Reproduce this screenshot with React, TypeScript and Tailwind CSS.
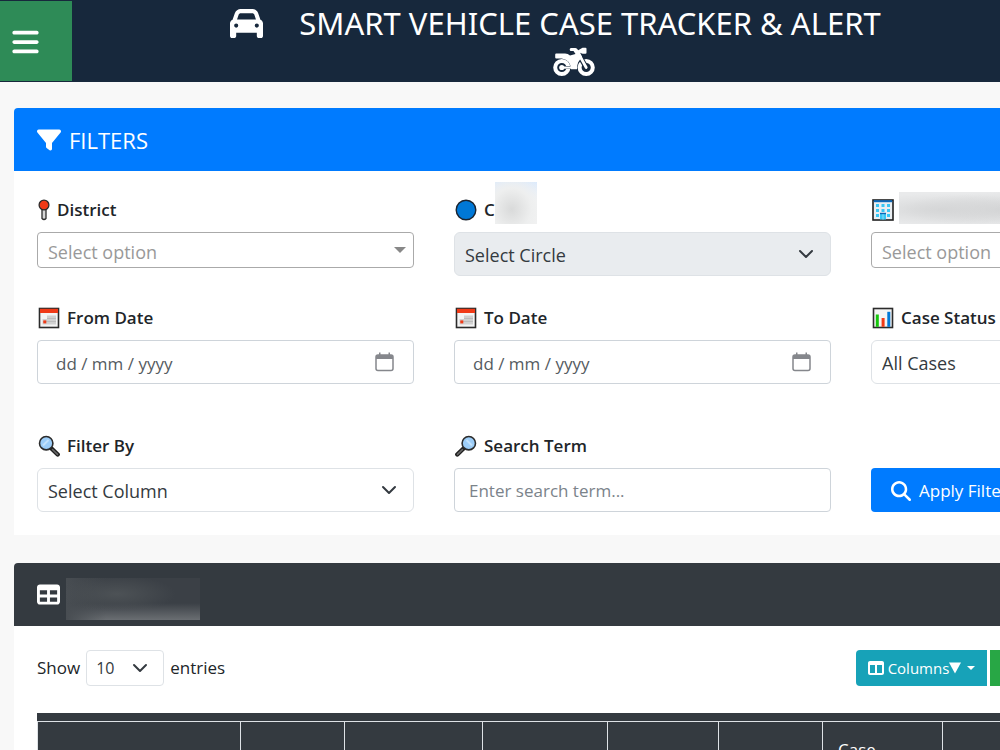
import type { ReactNode } from "react";
import {
  FaBars,
  FaCar,
  FaFilter,
  FaTable,
  FaTableColumns,
  FaMagnifyingGlass,
} from "react-icons/fa6";

function MotorcycleIcon() {
  return (
    <svg viewBox="0 0 42 30" className="h-[30px] w-[42px]" aria-hidden="true">
      <g fill="none" stroke="#fff">
        <circle cx="8.800" cy="20.500" r="6.600" strokeWidth="4" />
        <circle cx="33.200" cy="20.500" r="6.600" strokeWidth="4" />
        <path d="M26 8l7.200 12.500" stroke="#17283c" strokeWidth="5" />
        <path d="M25.500 6.500l7.700 14" strokeWidth="2.800" strokeLinecap="round" />
      </g>
      <path d="M10 19h10.500v3H10z" fill="#17283c" />
      <circle cx="8.800" cy="20.500" r="2.600" fill="#fff" />
      <path d="M9 19.500h12v2.200H9z" fill="#fff" />
      <path
        d="M3.200 6.500H12q3 0 5 2l5.500-1.500L20.500 4H18q-1.300 0-1.300-1.500T18 1h4.300q1 0 1.700.800L25.200 3.300 29.500.800h3q1 0 1 1v4q0 1-1 1h-3L27 5.800l2 4-3.800 5.500q-1 2-1.200 7H18q-.500-9.500-9.200-10.800H3.200q-1 0-1-1v-3q0-1 1-1z"
        fill="#fff"
      />
    </svg>
  );
}

function Chevron({ className }: { className: string }) {
  return (
    <svg
      viewBox="0 0 16 16"
      aria-hidden="true"
      className={`pointer-events-none absolute top-1/2 size-4 -translate-y-1/2 ${className}`}
    >
      <path
        d="m2 5 6 6 6-6"
        fill="none"
        stroke="#343a40"
        strokeWidth="2"
        strokeLinecap="round"
        strokeLinejoin="round"
      />
    </svg>
  );
}

function PinIcon() {
  return (
    <svg viewBox="0 0 12 22" className="h-[22px] w-[12px]" aria-hidden="true">
      <path d="M4 10v9.500q2 2 4 0V10z" fill="#d5d5d5" stroke="#2b2b2b" strokeWidth="1.300" />
      <circle cx="6" cy="6" r="4.900" fill="#f03a17" stroke="#2b2b2b" strokeWidth="1.300" />
    </svg>
  );
}

function CircleIcon() {
  return (
    <svg viewBox="0 0 22 22" className="size-[22px]" aria-hidden="true">
      <circle cx="11" cy="11" r="9.800" fill="#0078d7" stroke="#1b2430" strokeWidth="1.400" />
    </svg>
  );
}

function BuildingIcon() {
  return (
    <svg viewBox="0 0 22 22" className="size-[22px]" aria-hidden="true">
      <rect x="1" y="1" width="20" height="20" fill="#e9eef2" stroke="#1f1f1f" strokeWidth="1.600" />
      <rect x="1.800" y="1.200" width="18.400" height="2" fill="#0c68b8" />
      <g fill="#38c6f4">
        <rect x="4" y="5" width="3" height="3" />
        <rect x="9.500" y="5" width="3" height="3" />
        <rect x="15" y="5" width="3" height="3" />
        <rect x="4" y="10" width="3" height="3" />
        <rect x="9.500" y="10" width="3" height="3" />
        <rect x="15" y="10" width="3" height="3" />
        <rect x="4" y="15" width="3" height="3" />
        <rect x="15" y="15" width="3" height="3" />
        <rect x="8" y="14.500" width="6" height="6" />
      </g>
      <rect x="8" y="13.800" width="6" height="1.400" fill="#0c68b8" />
      <path d="M11 15.200v5.300" stroke="#8de0fa" />
    </svg>
  );
}

function CalendarEmoji() {
  return (
    <svg viewBox="0 0 22 22" className="size-[22px]" aria-hidden="true">
      <rect x="1.500" y="1.500" width="19" height="19" fill="#f4f4f4" stroke="#2b2b2b" strokeWidth="1.600" />
      <rect x="2" y="1.800" width="18" height="4.200" fill="#f03a17" />
      <path d="M9 8.500h9v9H4.500V12H9z" fill="#d0d0d0" />
      <path d="M9 11.500h9M5 14.500h13" stroke="#bcbcbc" />
      <rect x="5.300" y="13.400" width="3" height="3" fill="#f03a17" />
    </svg>
  );
}

function ChartEmoji() {
  return (
    <svg viewBox="0 0 22 22" className="size-[22px]" aria-hidden="true">
      <rect x="1.500" y="1.500" width="19" height="19" fill="#f4f4f4" stroke="#2b2b2b" strokeWidth="1.600" />
      <rect x="3.800" y="7.500" width="3" height="12.300" fill="#16c60c" />
      <rect x="9.600" y="11" width="3" height="8.800" fill="#f03a17" />
      <rect x="15.300" y="4.800" width="3" height="15" fill="#0078d7" />
    </svg>
  );
}

function LensIcon({ flipped = false }: { flipped?: boolean }) {
  return (
    <svg
      viewBox="0 0 22 22"
      className={flipped ? "size-[22px] -scale-x-100" : "size-[22px]"}
      aria-hidden="true"
    >
      <path d="m13.500 13.500 6.200 6" stroke="#1f1f1f" strokeWidth="4.400" strokeLinecap="round" />
      <path d="m14.500 14.500 5 4.900" stroke="#686868" strokeWidth="1.600" strokeLinecap="round" />
      <circle cx="8.200" cy="8.200" r="6.700" fill="#9ccdf8" stroke="#2b2b2b" strokeWidth="1.600" />
      <path d="M5 10.500 10.500 5" stroke="#c3e2fc" strokeWidth="2" />
    </svg>
  );
}

function Field({
  id,
  icon,
  label,
  className = "",
  children,
}: {
  id: string;
  icon: ReactNode;
  label: ReactNode;
  className?: string;
  children: ReactNode;
}) {
  return (
    <div className={`flex flex-col gap-2 ${className}`}>
      <label htmlFor={id} className="flex h-7 items-center gap-[7px] pl-px font-semibold">
        {icon}
        {label}
      </label>
      {children}
    </div>
  );
}

function SearchableSelect({ id }: { id: string }) {
  return (
    <div className="relative">
      <select
        id={id}
        className="block h-9 w-full appearance-none rounded border border-[#aaa] bg-white px-2.5 pt-1 text-[18px] text-[#999]"
      >
        <option>Select option</option>
      </select>
      <svg
        viewBox="0 0 12 6"
        aria-hidden="true"
        className="pointer-events-none absolute top-1/2 right-2 h-1.5 w-3 -translate-y-1/2"
      >
        <path d="M0 0h12L6 6z" fill="#888" />
      </svg>
    </div>
  );
}

function PlainSelect({ id, option, disabled = false }: { id: string; option: string; disabled?: boolean }) {
  return (
    <div className="relative">
      <select
        id={id}
        disabled={disabled}
        className="block h-11 w-full appearance-none rounded-md border border-[#dee2e6] bg-white px-2.5 pt-0.5 text-[18px] text-[#343a40] opacity-100 disabled:bg-[#e9ecef]"
      >
        <option>{option}</option>
      </select>
      <Chevron className="right-[17px]" />
    </div>
  );
}

function DateField({ id }: { id: string }) {
  return (
    <div className="relative">
      <input
        id={id}
        type="text"
        placeholder="dd / mm / yyyy"
        className="block h-11 w-full rounded border border-[#ced4da] bg-white px-[18px] pt-0.5 placeholder:text-[#555b61]"
      />
      <svg
        viewBox="0 0 20 20"
        aria-hidden="true"
        className="pointer-events-none absolute top-3 right-[19px] size-5"
      >
        <rect x="1" y="3" width="17" height="15.500" rx="2" fill="none" stroke="#85878c" strokeWidth="1.500" />
        <path d="M1 7V5q0-2 2-2h13q2 0 2 2v2zM4 .500h1.500V4H4zM13.500.500H15V4h-1.500z" fill="#85878c" />
      </svg>
    </div>
  );
}

const columns = [
  { width: "w-[203px]", title: "" },
  { width: "w-[104px]", title: "" },
  { width: "w-[138px]", title: "" },
  { width: "w-[125px]", title: "" },
  { width: "w-[111px]", title: "" },
  { width: "w-[104px]", title: "" },
  { width: "w-[120px]", title: "Case" },
  { width: "w-auto", title: "" },
];

export default function App() {
  return (
    <div className="h-screen overflow-hidden bg-[#f8f8f8] font-['Open_Sans',sans-serif] text-[17px] leading-6 text-[#212529]">
      <header className="flex h-[82px] items-stretch bg-[#17283c] text-white">
        <button
          type="button"
          aria-label="Menu"
          className="my-px flex w-[72px] shrink-0 items-center bg-[#2e8b57] pt-px pl-3"
        >
          <FaBars className="h-[30px] w-[27px]" />
        </button>
        <h1 className="flex flex-1 flex-col items-center gap-1 pl-[75px] pt-[3px]">
          <span className="mr-9 flex items-center gap-9 font-['Noto_Sans',sans-serif] text-[31px] leading-[40px] whitespace-nowrap">
            <FaCar className="size-[33px]" />
            SMART VEHICLE CASE TRACKER &amp; ALERT
          </span>
          <MotorcycleIcon />
        </h1>
      </header>

      <main className="flex min-w-[1285px] flex-col gap-7 px-3.5 pt-[26px]">
        <section className="rounded-t bg-white">
          <h2 className="flex h-[63px] items-center gap-2 rounded-t bg-[#007bff] px-[23px] text-[22px] text-white">
            <FaFilter className="size-6" />
            FILTERS
          </h2>
          <form className="grid grid-cols-3 gap-x-10 gap-y-7 px-[23px] pt-[25px] pb-[23px]">
            <Field id="district" icon={<PinIcon />} label="District">
              <SearchableSelect id="district" />
            </Field>
            <Field
              id="circle"
              icon={<CircleIcon />}
              label={
                <span className="flex items-center">
                  C
                  <span className="-mt-3.5 h-[42px] w-[42px] bg-[radial-gradient(ellipse_at_40%_65%,#d9dada_0%,#eeefef_55%,#f3f3f300_100%),linear-gradient(#dbeafd,#f4f5f6_45%,#f3f3f3)]" />
                </span>
              }
            >
              <PlainSelect id="circle" option="Select Circle" disabled />
            </Field>
            <Field
              id="station"
              icon={<BuildingIcon />}
              label={
                <span className="-mt-1 -ml-0.5 h-8 w-36 bg-[radial-gradient(ellipse_at_30%_55%,#d5d6d7_0%,#d5d6d700_65%),radial-gradient(ellipse_at_75%_55%,#d2d3d4_0%,#e9eaeb_70%)]" />
              }
            >
              <SearchableSelect id="station" />
            </Field>
            <Field id="from-date" icon={<CalendarEmoji />} label="From Date">
              <DateField id="from-date" />
            </Field>
            <Field id="to-date" icon={<CalendarEmoji />} label="To Date">
              <DateField id="to-date" />
            </Field>
            <Field id="status" icon={<ChartEmoji />} label="Case Status">
              <PlainSelect id="status" option="All Cases" />
            </Field>
            <Field id="filter-by" icon={<LensIcon />} label="Filter By" className="mt-5">
              <PlainSelect id="filter-by" option="Select Column" />
            </Field>
            <Field id="term" icon={<LensIcon flipped />} label="Search Term" className="mt-5">
              <input
                id="term"
                type="text"
                placeholder="Enter search term..."
                className="block h-11 w-full rounded border border-[#ced4da] bg-white px-3.5 pt-px placeholder:text-[#7b838a]"
              />
            </Field>
            <div className="flex items-end">
              <button
                type="button"
                className="flex h-11 items-center gap-2 rounded bg-[#007bff] px-5 pt-0.5 text-white"
              >
                <FaMagnifyingGlass className="size-5" />
                Apply Filters
              </button>
            </div>
          </form>
        </section>

        <section className="rounded-t bg-white">
          <h2 className="flex h-[63px] items-center gap-1.5 rounded-t bg-[#343a40] px-[23px] text-white">
            <FaTable className="size-[23px]" />
            <span className="mt-2 h-[42px] w-[134px] bg-[radial-gradient(ellipse_at_38%_38%,#4d5256_0%,#4d525600_50%),linear-gradient(90deg,#484d52,#484d5200_30%,#484d5200),linear-gradient(#3b4046_60%,#6a6e72)]" />
          </h2>
          <div className="flex items-center justify-between px-[23px] pt-6">
            <label className="flex items-center gap-1.5">
              Show
              <span className="relative">
                <select className="block h-9 w-[78px] appearance-none rounded border border-[#dee2e6] bg-white px-[9px] text-[16px] text-[#343a40]">
                  <option>10</option>
                </select>
                <Chevron className="right-4" />
              </span>
              entries
            </label>
            <div className="flex w-[392px] gap-[3px] text-[15px] text-white">
              <button
                type="button"
                className="flex h-9 w-[131px] items-center justify-center rounded-l bg-[#17a2b8]"
              >
                <FaTableColumns className="mr-1 size-4 shrink-0" />
                Columns
                <svg viewBox="0 0 12 12" className="size-3 shrink-0" aria-hidden="true">
                  <path d="M0 .500h12L6 11.500z" fill="#fff" />
                </svg>
                <svg viewBox="0 0 8 4" className="ml-1.5 h-1 w-2 shrink-0" aria-hidden="true">
                  <path d="M0 0h8L4 4z" fill="#fff" />
                </svg>
              </button>
              <button type="button" aria-label="Export" className="h-9 w-24 bg-[#28a745]" />
            </div>
          </div>
          <div className="px-[23px] pt-[27px]">
            <div className="border-t-8 border-[#343a40]">
              <table className="w-full table-fixed border-collapse bg-[#343a40] text-white">
                <thead>
                  <tr>
                    {columns.map((column, index) => (
                      <th
                        key={index}
                        className={`h-16 border border-[#dee2e6] px-[15px] pt-4 text-left align-top font-medium ${column.width}`}
                      >
                        {column.title}
                      </th>
                    ))}
                  </tr>
                </thead>
              </table>
            </div>
          </div>
        </section>
      </main>
    </div>
  );
}
